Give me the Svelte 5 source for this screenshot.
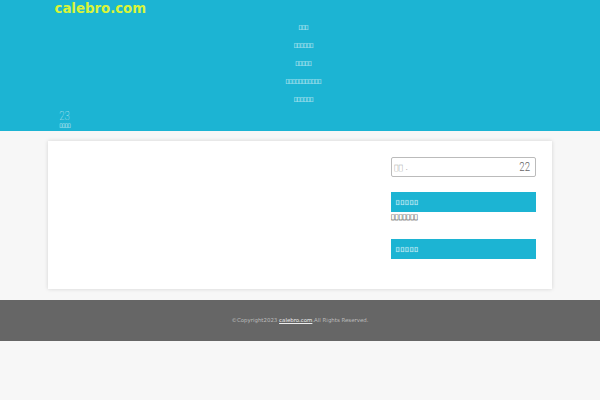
<script>
  const box = '\uE000';
  const rep = (n) => box.repeat(n);
  const menu = [3, 6, 5, 11, 6];
</script>

<div class="page">
  <header class="header">
    <div class="brand">calebro.com</div>
    <nav class="menu">
      {#each menu as n}
        <a class="menu-item" href="#top">{rep(n)}</a>
      {/each}
    </nav>
    <div class="date">
      <span class="date-num">23</span>
      <span class="date-sub">{rep(4)}</span>
    </div>
  </header>

  <main class="card">
    <div class="content"></div>
    <aside class="side">
      <div class="search">
        <span class="search-label">{rep(2)} .</span>
        <span class="search-icon">22</span>
      </div>
      <section class="widget">
        <h3 class="widget-title">{rep(5)}</h3>
        <p class="widget-text">{rep(7)}</p>
      </section>
      <section class="widget">
        <h3 class="widget-title">{rep(5)}</h3>
      </section>
    </aside>
  </main>

  <footer class="footer">
    ©Copyright2023 <a href="#top">calebro.com</a>.All Rights Reserved.
  </footer>
</div>

<style>
  :global(body) {
    margin: 0;
    background: #f7f7f7;
    font-family: "DejaVu Sans", sans-serif;
  }
  .page {
    height: 400px;
    overflow: hidden;
  }
  .header {
    height: 131px;
    background: #1cb4d3;
    display: flex;
    flex-direction: column;
  }
  .brand {
    margin-left: 54.5px;
    height: 18px;
    font-size: 13.3px;
    line-height: 17px;
    font-weight: 700;
    color: #d8f53a;
  }
  .menu {
    display: flex;
    flex-direction: column;
    align-items: center;
    padding-left: 7px;
  }
  .menu-item {
    height: 18px;
    line-height: 18px;
    font-size: 5.35px;
    color: #fff;
    text-decoration: none;
  }
  .date {
    margin: 3px 0 0 59px;
    width: 12px;
    display: flex;
    flex-direction: column;
    align-items: center;
    color: #fff;
  }
  .date-num {
    font-family: Roboto, sans-serif;
    font-size: 12px;
    line-height: 11px;
    font-weight: 100;
    opacity: 0.75;
    transform: scaleX(0.8);
  }
  .date-sub {
    margin-top: 1px;
    font-size: 4.6px;
    line-height: 5px;
    font-weight: 700;
  }
  .card {
    width: 504px;
    height: 148px;
    margin: 10px auto 0;
    background: #fff;
    box-shadow: 0 0 4px rgba(0, 0, 0, 0.15);
    display: flex;
    justify-content: flex-end;
  }
  .side {
    width: 145px;
    margin-right: 16px;
    padding-top: 16px;
  }
  .search {
    box-sizing: border-box;
    height: 20px;
    border: 1px solid #bbb;
    border-radius: 2px;
    display: flex;
    justify-content: space-between;
    align-items: center;
    padding: 0 4px 0 2px;
    font-size: 7.5px;
    color: #aaa;
  }
  .search-icon {
    font-family: Roboto, sans-serif;
    font-size: 12px;
    font-weight: 300;
    color: #666;
    transform: scaleX(0.8);
  }
  .widget {
    margin-top: 15px;
  }
  .widget-title {
    margin: 0;
    height: 20px;
    line-height: 21px;
    padding-left: 5px;
    background: #1cb4d3;
    color: #fff;
    font-size: 5.5px;
    font-weight: 700;
    letter-spacing: 1.35px;
    text-shadow: 0 0 1px #fff;
  }
  .widget-text {
    margin: 0;
    font-size: 6.4px;
    line-height: 10px;
    color: #111;
  }
  .widget + .widget {
    margin-top: 17px;
  }
  .footer {
    margin-top: 11px;
    height: 41px;
    line-height: 40px;
    background: #666;
    color: #bbb;
    font-size: 5.45px;
    text-align: center;
  }
  .footer a {
    color: #eee;
  }
</style>
